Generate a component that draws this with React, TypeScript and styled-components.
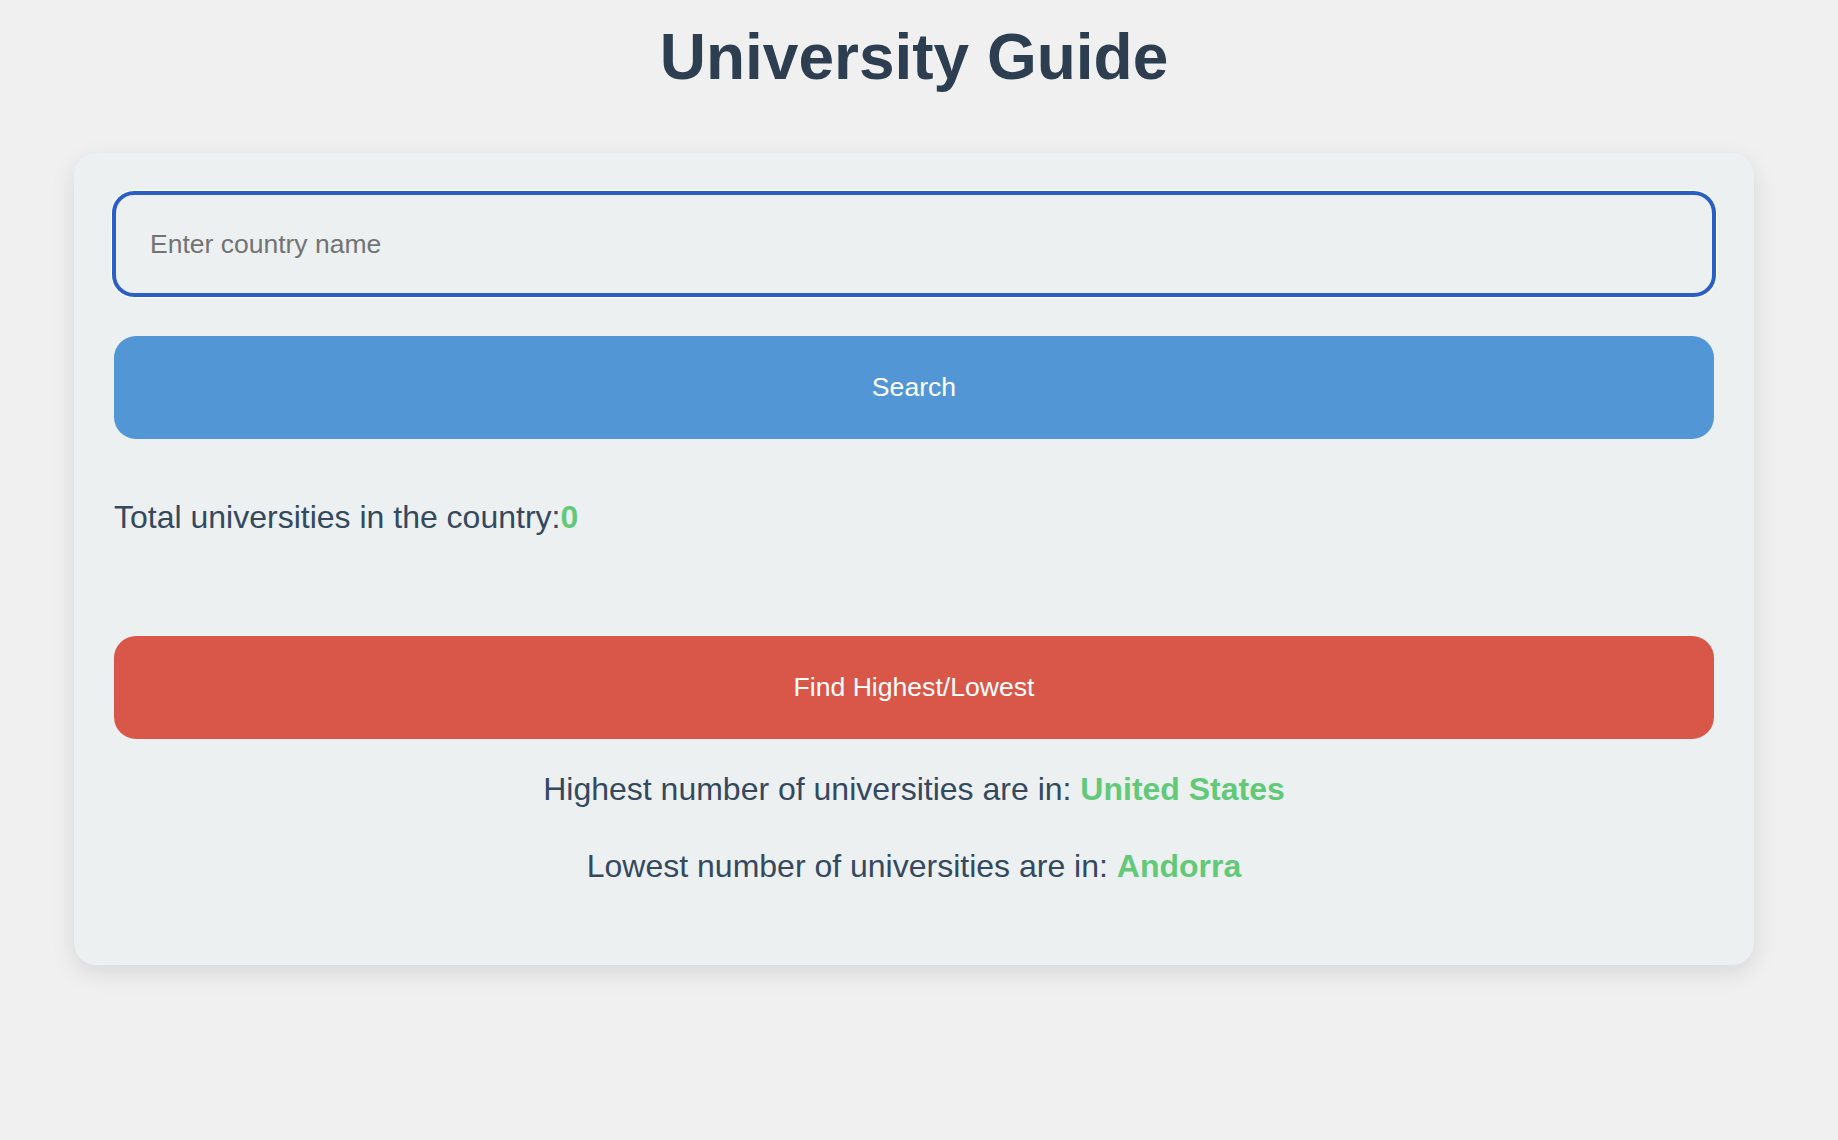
import React from "react";
import styled, { createGlobalStyle } from "styled-components";

const GlobalStyle = createGlobalStyle`
  html, body {
    margin: 0;
    padding: 0;
    background: #f0f0f0;
    font-family: "Liberation Sans", Arial, Helvetica, sans-serif;
  }
  * { box-sizing: border-box; }
`;

const Page = styled.div`
  padding: 20px 10px 80px 0;
`;

const Title = styled.h1`
  margin: 0;
  text-align: center;
  font-size: 64px;
  font-weight: 700;
  line-height: normal;
  color: #2c3e50;
`;

const Card = styled.section`
  box-sizing: content-box;
  max-width: 1600px;
  margin: 59px auto 0;
  padding: 40px;
  background: #ecf0f1;
  border-radius: 22px;
  box-shadow: 0 8px 24px rgba(0, 0, 0, 0.1);
  display: flex;
  flex-direction: column;
`;

const CountryInput = styled.input`
  display: block;
  width: 100%;
  height: 102px;
  margin: 0;
  padding: 0 34px;
  font-family: inherit;
  font-size: 26.5px;
  color: #2c3e50;
  caret-color: #000;
  background: #ecf0f1;
  border: 2px solid #2a5fc5;
  border-radius: 20px;
  outline: none;
  box-shadow: 0 0 0 2px #2a5fc5, 0 0 0 3px #ffffff;

  &::placeholder {
    color: #737373;
  }
`;

const ActionButton = styled.button<{ $tone: "blue" | "red"; $top: number }>`
  display: flex;
  align-items: center;
  justify-content: center;
  width: 100%;
  height: 103px;
  margin: ${(p) => p.$top}px 0 0;
  padding: 0;
  border: none;
  border-radius: 22px;
  background: ${(p) => (p.$tone === "blue" ? "#5296d5" : "#d95749")};
  color: #ffffff;
  font-family: inherit;
  font-size: 26.6px;
  cursor: pointer;
`;

const InfoLine = styled.p<{ $top: number; $bottom?: number; $center?: boolean }>`
  margin: ${(p) => p.$top}px 0 ${(p) => p.$bottom ?? 0}px;
  font-size: 32px;
  line-height: normal;
  color: #34495e;
  text-align: ${(p) => (p.$center ? "center" : "left")};
`;

const Highlight = styled.span`
  color: #62c979;
  font-weight: 700;
`;

export default function App() {
  return (
    <>
      <GlobalStyle />
      <Page>
        <Title>University Guide</Title>
        <Card>
          <CountryInput type="text" placeholder="Enter country name" autoFocus />
          <ActionButton $tone="blue" $top={41}>Search</ActionButton>
          <InfoLine $top={60}>
            Total universities in the country:<Highlight>0</Highlight>
          </InfoLine>
          <ActionButton $tone="red" $top={100}>Find Highest/Lowest</ActionButton>
          <InfoLine $top={32} $center>
            Highest number of universities are in: <Highlight>United States</Highlight>
          </InfoLine>
          <InfoLine $top={40} $bottom={40} $center>
            Lowest number of universities are in: <Highlight>Andorra</Highlight>
          </InfoLine>
        </Card>
      </Page>
    </>
  );
}
